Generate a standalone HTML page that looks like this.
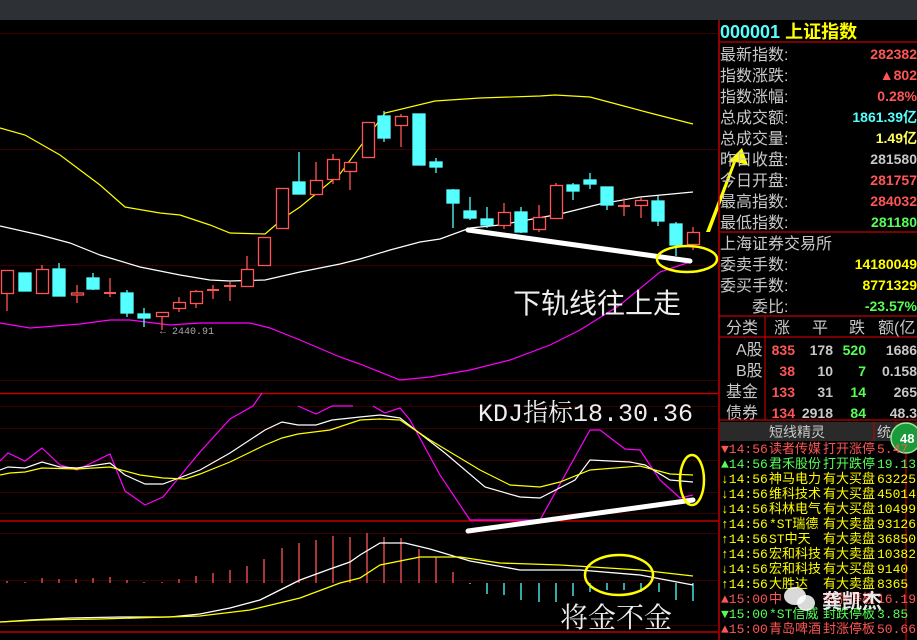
<!DOCTYPE html>
<html><head><meta charset="utf-8"><style>
html,body{margin:0;padding:0;background:#000;width:917px;height:640px;overflow:hidden}
svg{display:block;font-family:"Liberation Sans","Noto Sans CJK SC",sans-serif}
</style></head><body>
<svg width="917" height="640" viewBox="0 0 917 640" xmlns="http://www.w3.org/2000/svg">
<rect x="0" y="0" width="917" height="640" fill="#000"/>
<rect x="0" y="0" width="917" height="20" fill="#2d3035"/>
<g stroke="#3a0000" stroke-width="1">
<line x1="0" y1="33.5" x2="718" y2="33.5"/><line x1="0" y1="149.5" x2="718" y2="149.5"/><line x1="0" y1="265.5" x2="718" y2="265.5"/>
<line x1="0" y1="380.5" x2="718" y2="380.5"/><line x1="0" y1="406.5" x2="718" y2="406.5"/><line x1="0" y1="428.5" x2="718" y2="428.5"/><line x1="0" y1="460.5" x2="718" y2="460.5"/><line x1="0" y1="492.5" x2="718" y2="492.5"/><line x1="0" y1="513.5" x2="718" y2="513.5"/><line x1="0" y1="533.5" x2="718" y2="533.5"/><line x1="0" y1="580.5" x2="718" y2="580.5"/><line x1="0" y1="625.5" x2="718" y2="625.5"/>
</g>
<g stroke="#c00000" stroke-width="1.5">
<line x1="0" y1="393.5" x2="718" y2="393.5"/><line x1="0" y1="521" x2="718" y2="521"/><line x1="0" y1="632" x2="718" y2="632"/>
</g>
<polyline fill="none" stroke="#ffff00" stroke-width="1.2" points="0,128 25,135 60,155 100,185 125,207 160,213 180,215 210,225 230,233 265,234 285,217 300,207 340,174 385,113 435,101 480,98 540,96 555,95 590,97 620,105 650,113 693,124"/>
<polyline fill="none" stroke="#ffffff" stroke-width="1.2" points="0,226 40,235 70,243 100,255 140,267 180,275 210,280 230,281 265,280 300,272 340,264 360,259 390,250 420,242 440,239 470,228 500,225 560,214 600,204 640,197 693,192"/>
<polyline fill="none" stroke="#ff00ff" stroke-width="1.2" points="0,323 30,328 80,324 110,320 130,320 170,325 200,323 250,323 270,328 300,340 340,357 360,364 400,380 430,377 470,370 510,360 550,345 580,330 620,305 660,272 690,262"/>
<text x="160" y="334" fill="#aaa" font-size="10" font-family="Liberation Mono,monospace">← 2440.91</text>
<g stroke="#ff5555" stroke-width="1.3" fill="#000">
<line x1="7" y1="293" x2="7" y2="311"/><rect x="1.5" y="270.5" width="12" height="23"/>
<line x1="42" y1="265" x2="42" y2="269"/><rect x="36.5" y="269.5" width="12" height="24"/>
<line x1="77" y1="285" x2="77" y2="303"/><rect x="71.5" y="293" width="12" height="2"/>
<line x1="110" y1="278" x2="110" y2="297"/><line x1="104" y1="293" x2="116" y2="293" stroke-width="2"/>
<line x1="162" y1="316" x2="162" y2="330"/><rect x="156.5" y="312.5" width="12" height="4"/>
<line x1="179" y1="297" x2="179" y2="312"/><rect x="173.5" y="302.5" width="12" height="6"/>
<line x1="196" y1="290" x2="196" y2="308"/><rect x="190.5" y="291.5" width="12" height="12"/>
<line x1="213" y1="285" x2="213" y2="299"/><line x1="207" y1="290" x2="219" y2="290" stroke-width="2"/>
<line x1="230" y1="282" x2="230" y2="301"/><line x1="224" y1="286" x2="236" y2="286" stroke-width="2"/>
<line x1="247" y1="256" x2="247" y2="269"/><rect x="241.5" y="269.5" width="12" height="17"/>
<rect x="258.5" y="237.5" width="12" height="28"/>
<rect x="276.5" y="188.5" width="12" height="40"/>
<line x1="316" y1="162" x2="316" y2="180"/><rect x="310.5" y="180.5" width="12" height="14"/>
<line x1="333" y1="154" x2="333" y2="184"/><rect x="327.5" y="159.5" width="12" height="20"/>
<line x1="350" y1="171" x2="350" y2="190"/><rect x="344.5" y="162.5" width="12" height="9"/>
<rect x="362.5" y="122.5" width="12" height="35"/>
<line x1="401" y1="114" x2="401" y2="147"/><rect x="395.5" y="116.5" width="12" height="9"/>
<line x1="504" y1="203" x2="504" y2="229"/><rect x="498.5" y="212.5" width="12" height="13"/>
<line x1="539" y1="205" x2="539" y2="232"/><rect x="533.5" y="217.5" width="12" height="12"/>
<line x1="556" y1="183" x2="556" y2="185"/><rect x="550.5" y="185.5" width="12" height="33"/>
<line x1="624" y1="198" x2="624" y2="216"/><line x1="618" y1="206" x2="630" y2="206" stroke-width="2"/>
<line x1="641" y1="198" x2="641" y2="218"/><rect x="635.5" y="200.5" width="12" height="5"/>
<line x1="693" y1="227" x2="693" y2="250"/><rect x="687.5" y="232.5" width="12" height="12"/>
</g>
<g stroke="#55ffff" stroke-width="1.3" fill="#55ffff">
<rect x="19" y="273" width="12" height="18"/>
<line x1="59" y1="263" x2="59" y2="296"/><rect x="53" y="269" width="12" height="27"/>
<line x1="93" y1="273" x2="93" y2="290"/><rect x="87" y="278" width="12" height="11"/>
<line x1="127" y1="290" x2="127" y2="317"/><rect x="121" y="293" width="12" height="20"/>
<line x1="144" y1="308" x2="144" y2="327"/><rect x="138" y="314" width="12" height="4"/>
<line x1="299" y1="152" x2="299" y2="194"/><rect x="293" y="182" width="12" height="12"/>
<line x1="384" y1="111" x2="384" y2="142"/><rect x="378" y="116" width="12" height="22"/>
<rect x="413" y="114" width="12" height="51"/>
<line x1="436" y1="158" x2="436" y2="173"/><rect x="430" y="162" width="12" height="5"/>
<line x1="453" y1="189" x2="453" y2="228"/><rect x="447" y="190" width="12" height="13"/>
<line x1="470" y1="197" x2="470" y2="220"/><rect x="464" y="211" width="12" height="7"/>
<line x1="487" y1="207" x2="487" y2="228"/><rect x="481" y="219" width="12" height="6"/>
<line x1="521" y1="207" x2="521" y2="233"/><rect x="515" y="212" width="12" height="20"/>
<line x1="573" y1="183" x2="573" y2="200"/><rect x="567" y="185" width="12" height="6"/>
<line x1="590" y1="173" x2="590" y2="189"/><rect x="584" y="180" width="12" height="4"/>
<line x1="607" y1="187" x2="607" y2="210"/><rect x="601" y="187" width="12" height="18"/>
<line x1="658" y1="196" x2="658" y2="226"/><rect x="652" y="201" width="12" height="20"/>
<line x1="676" y1="222" x2="676" y2="256"/><rect x="670" y="224" width="12" height="21"/>
</g>
<line x1="468" y1="230" x2="690" y2="261" stroke="#fff" stroke-width="5" stroke-linecap="round"/>
<ellipse cx="687" cy="259" rx="30" ry="13" fill="none" stroke="#ffff00" stroke-width="2.5"/>
<polygon points="706,232 710,232 736,162 748,165 742,148 728,162 733,162" fill="#ffff00"/>
<text x="513" y="313" fill="#eee" font-size="28">下轨线往上走</text>
<polyline fill="none" stroke="#ff00ff" stroke-width="1.2" points="0,461 8,453 25,461 42,448 60,465 77,470 110,454 125,491 145,505 163,497 200,452 230,419 253,406 262,393"/>
<polyline fill="none" stroke="#ff00ff" stroke-width="1.2" points="298,406 316,414 332,406 353,406"/>
<polyline fill="none" stroke="#ff00ff" stroke-width="1.2" points="373,406 385,413 400,408 410,420 440,475 470,520 540,520 590,430 600,430 625,449 640,450 660,480 680,498 693,495"/>
<polyline fill="none" stroke="#ffffff" stroke-width="1.2" points="0,470 8,467 25,468 42,462 60,467 77,468 110,463 125,475 145,484 163,484 200,470 230,453 265,430 282,422 298,425 316,425 332,420 360,417 380,415 400,418 445,453 485,487 520,497 540,498 575,480 590,460 630,462 645,465 670,480 693,482"/>
<polyline fill="none" stroke="#ffff00" stroke-width="1.2" points="0,475 10,473 25,472 42,468 77,469 110,467 140,475 163,478 185,479 200,474 230,462 265,445 282,438 298,434 330,430 360,420 380,419 400,420 430,440 480,470 510,485 540,487 560,482 590,470 640,466 670,474 693,475"/>
<line x1="468" y1="531" x2="693" y2="500" stroke="#fff" stroke-width="5" stroke-linecap="round"/>
<ellipse cx="692" cy="480" rx="12" ry="25" fill="none" stroke="#ffff00" stroke-width="2.5"/>
<text x="478" y="421" fill="#eee" font-size="25" font-family="Liberation Mono,Noto Serif CJK SC,monospace">KDJ指标18.30.36</text>
<g stroke="#ff5555" stroke-width="1.3">
<line x1="7" y1="581" x2="7" y2="583"/><line x1="25" y1="582" x2="25" y2="583"/><line x1="42" y1="578" x2="42" y2="583"/><line x1="59" y1="579" x2="59" y2="583"/><line x1="76" y1="579" x2="76" y2="583"/><line x1="93" y1="578" x2="93" y2="583"/><line x1="110" y1="577" x2="110" y2="583"/><line x1="127" y1="580" x2="127" y2="583"/><line x1="144" y1="582" x2="144" y2="583"/><line x1="162" y1="582" x2="162" y2="583"/><line x1="179" y1="579" x2="179" y2="583"/><line x1="196" y1="576" x2="196" y2="583"/><line x1="213" y1="573" x2="213" y2="583"/><line x1="230" y1="570" x2="230" y2="583"/><line x1="247" y1="566" x2="247" y2="583"/><line x1="264" y1="559" x2="264" y2="583"/><line x1="282" y1="548" x2="282" y2="583"/><line x1="299" y1="543" x2="299" y2="583"/><line x1="316" y1="540" x2="316" y2="583"/><line x1="333" y1="536" x2="333" y2="583"/><line x1="350" y1="537" x2="350" y2="583"/><line x1="367" y1="533" x2="367" y2="583"/><line x1="384" y1="537" x2="384" y2="583"/><line x1="401" y1="538" x2="401" y2="583"/><line x1="419" y1="549" x2="419" y2="583"/><line x1="436" y1="557" x2="436" y2="583"/><line x1="453" y1="572" x2="453" y2="583"/>
</g>
<g stroke="#55ffff" stroke-width="1.3">
<line x1="470" y1="583" x2="470" y2="584"/><line x1="487" y1="583" x2="487" y2="594"/><line x1="504" y1="583" x2="504" y2="595"/><line x1="521" y1="583" x2="521" y2="600"/><line x1="539" y1="583" x2="539" y2="602"/><line x1="556" y1="583" x2="556" y2="602"/><line x1="573" y1="583" x2="573" y2="596"/><line x1="590" y1="583" x2="590" y2="592"/><line x1="607" y1="583" x2="607" y2="590"/><line x1="624" y1="583" x2="624" y2="590"/><line x1="641" y1="583" x2="641" y2="592"/><line x1="659" y1="583" x2="659" y2="592"/><line x1="676" y1="583" x2="676" y2="600"/><line x1="693" y1="583" x2="693" y2="601"/>
</g>
<polyline fill="none" stroke="#ffffff" stroke-width="1.3" points="0,622 30,620 70,618 120,617 170,617 200,614 230,608 260,600 280,590 300,580 330,569 350,562 360,555 380,543 405,543 430,549 470,561 520,570 580,570 640,575 693,585"/>
<polyline fill="none" stroke="#ffff00" stroke-width="1.3" points="0,622 40,620 100,619 200,616 250,610 300,598 340,583 360,578 380,565 420,557 460,557 500,563 560,565 640,570 693,576"/>
<ellipse cx="619" cy="575" rx="34" ry="20" fill="none" stroke="#ffff00" stroke-width="2.5"/>
<text x="560" y="627" fill="#eee" font-size="28" font-family="Liberation Serif,Noto Serif CJK SC,serif">将金不金</text>

<line x1="719" y1="20" x2="719" y2="640" stroke="#c00000" stroke-width="1.5"/>
<g stroke="#c00000" stroke-width="1.2">
<line x1="719" y1="42" x2="917" y2="42"/><line x1="719" y1="232" x2="917" y2="232"/><line x1="719" y1="316" x2="917" y2="316"/><line x1="719" y1="337" x2="917" y2="337"/><line x1="719" y1="420" x2="917" y2="420"/>
<line x1="765" y1="316" x2="765" y2="420"/>
<line x1="906" y1="442" x2="906" y2="640"/>
</g>
<text x="720" y="38" font-size="18" font-weight="bold" fill="#55ffff">000001 <tspan fill="#ffff00">上证指数</tspan></text>
<g fill="#c8c8c8" font-size="16">
<text x="720" y="60">最新指数:</text><text x="720" y="81">指数涨跌:</text><text x="720" y="102">指数涨幅:</text><text x="720" y="123">总成交额:</text><text x="720" y="144">总成交量:</text><text x="720" y="165">昨日收盘:</text><text x="720" y="186">今日开盘:</text><text x="720" y="207">最高指数:</text><text x="720" y="228">最低指数:</text>
<text x="720" y="249">上海证券交易所</text><text x="720" y="270">委卖手数:</text><text x="720" y="291">委买手数:</text><text x="752" y="312">委比:</text>
<text x="726" y="333">分类</text><text x="774" y="333">涨</text><text x="812" y="333">平</text><text x="849" y="333">跌</text><text x="878" y="333">额(亿</text>
<text x="736" y="355">A股</text><text x="736" y="376">B股</text><text x="726" y="397">基金</text><text x="726" y="418">债券</text>
</g>
<g font-size="14" font-weight="bold" text-anchor="end">
<text x="917" y="59" fill="#ff5555">282382</text><text x="917" y="80" fill="#ff5555">▲802</text><text x="917" y="101" fill="#ff5555">0.28%</text>
<text x="917" y="122" fill="#55ffff">1861.39亿</text><text x="917" y="143" fill="#ffff55">1.49亿</text><text x="917" y="164" fill="#c8c8c8">281580</text>
<text x="917" y="185" fill="#ff5555">281757</text><text x="917" y="206" fill="#ff5555">284032</text><text x="917" y="227" fill="#55ff55">281180</text>
<text x="917" y="269" fill="#ffff00">14180049</text><text x="917" y="290" fill="#ffff00">8771329</text><text x="917" y="311" fill="#55ff55">-23.57%</text>
<text x="795" y="355" fill="#ff5555">835</text><text x="833" y="355" fill="#c8c8c8">178</text><text x="866" y="355" fill="#55ff55">520</text><text x="917" y="355" fill="#c8c8c8">1686</text>
<text x="795" y="376" fill="#ff5555">38</text><text x="833" y="376" fill="#c8c8c8">10</text><text x="866" y="376" fill="#55ff55">7</text><text x="917" y="376" fill="#c8c8c8">0.158</text>
<text x="795" y="397" fill="#ff5555">133</text><text x="833" y="397" fill="#c8c8c8">31</text><text x="866" y="397" fill="#55ff55">14</text><text x="917" y="397" fill="#c8c8c8">265</text>
<text x="795" y="418" fill="#ff5555">134</text><text x="833" y="418" fill="#c8c8c8">2918</text><text x="866" y="418" fill="#55ff55">84</text><text x="917" y="418" fill="#c8c8c8">48.3</text>
</g>
<rect x="720" y="422" width="197" height="19" fill="#2a2a2a"/>
<line x1="874" y1="422" x2="874" y2="441" stroke="#c00000"/><line x1="896" y1="422" x2="896" y2="441" stroke="#c00000"/>
<text x="797" y="437" text-anchor="middle" font-size="14" fill="#c8c8c8">短线精灵</text>
<text x="877" y="437" font-size="14" fill="#c8c8c8">统</text>
<circle cx="906" cy="438" r="15" fill="#1a9a3a" stroke="#9be89b" stroke-width="1.5"/>
<text x="900" y="443" font-size="13" font-weight="bold" fill="#fff">48</text>
<g font-size="13" font-family="Liberation Mono,Noto Sans CJK SC,monospace">
<text y="453" fill="#ff5555"><tspan x="721">▼14:56</tspan><tspan x="769">读者传媒</tspan><tspan x="823">打开涨停</tspan><tspan x="877">5.47</tspan></text>
<text y="468" fill="#55ff55"><tspan x="721">▲14:56</tspan><tspan x="769">君禾股份</tspan><tspan x="823">打开跌停</tspan><tspan x="877">19.13</tspan></text>
<text y="483" fill="#ffff00"><tspan x="721">↓14:56</tspan><tspan x="769">神马电力</tspan><tspan x="823">有大买盘</tspan><tspan x="877">63225</tspan></text>
<text y="498" fill="#ffff00"><tspan x="721">↓14:56</tspan><tspan x="769">维科技术</tspan><tspan x="823">有大买盘</tspan><tspan x="877">45014</tspan></text>
<text y="513" fill="#ffff00"><tspan x="721">↓14:56</tspan><tspan x="769">科林电气</tspan><tspan x="823">有大买盘</tspan><tspan x="877">10499</tspan></text>
<text y="528" fill="#ffff00"><tspan x="721">↑14:56</tspan><tspan x="769">*ST瑞德</tspan><tspan x="823">有大卖盘</tspan><tspan x="877">93126</tspan></text>
<text y="543" fill="#ffff00"><tspan x="721">↑14:56</tspan><tspan x="769">ST中天</tspan><tspan x="823">有大卖盘</tspan><tspan x="877">36850</tspan></text>
<text y="558" fill="#ffff00"><tspan x="721">↑14:56</tspan><tspan x="769">宏和科技</tspan><tspan x="823">有大卖盘</tspan><tspan x="877">10382</tspan></text>
<text y="573" fill="#ffff00"><tspan x="721">↓14:56</tspan><tspan x="769">宏和科技</tspan><tspan x="823">有大买盘</tspan><tspan x="877">9140</tspan></text>
<text y="588" fill="#ffff00"><tspan x="721">↑14:56</tspan><tspan x="769">大胜达</tspan><tspan x="823">有大卖盘</tspan><tspan x="877">8365</tspan></text>
<text y="603" fill="#ff5555"><tspan x="721">▲15:00</tspan><tspan x="769">中</tspan><tspan x="823">封涨停板</tspan><tspan x="877">16.19</tspan></text>
<text y="618" fill="#55ff55"><tspan x="721">▼15:00</tspan><tspan x="769">*ST信威</tspan><tspan x="823">封跌停板</tspan><tspan x="877">3.85</tspan></text>
<text y="633" fill="#ff5555"><tspan x="721">▲15:00</tspan><tspan x="769">青岛啤酒</tspan><tspan x="823">封涨停板</tspan><tspan x="877">50.66</tspan></text>
</g>
<ellipse cx="795" cy="596" rx="11" ry="9" fill="#fff" opacity="0.85"/>
<ellipse cx="806" cy="603" rx="9" ry="8" fill="#fff" opacity="0.85"/>
<text x="822" y="608" font-size="20" font-weight="bold" fill="#fff" opacity="0.9">龚凯杰</text>
</svg>
</body></html>
